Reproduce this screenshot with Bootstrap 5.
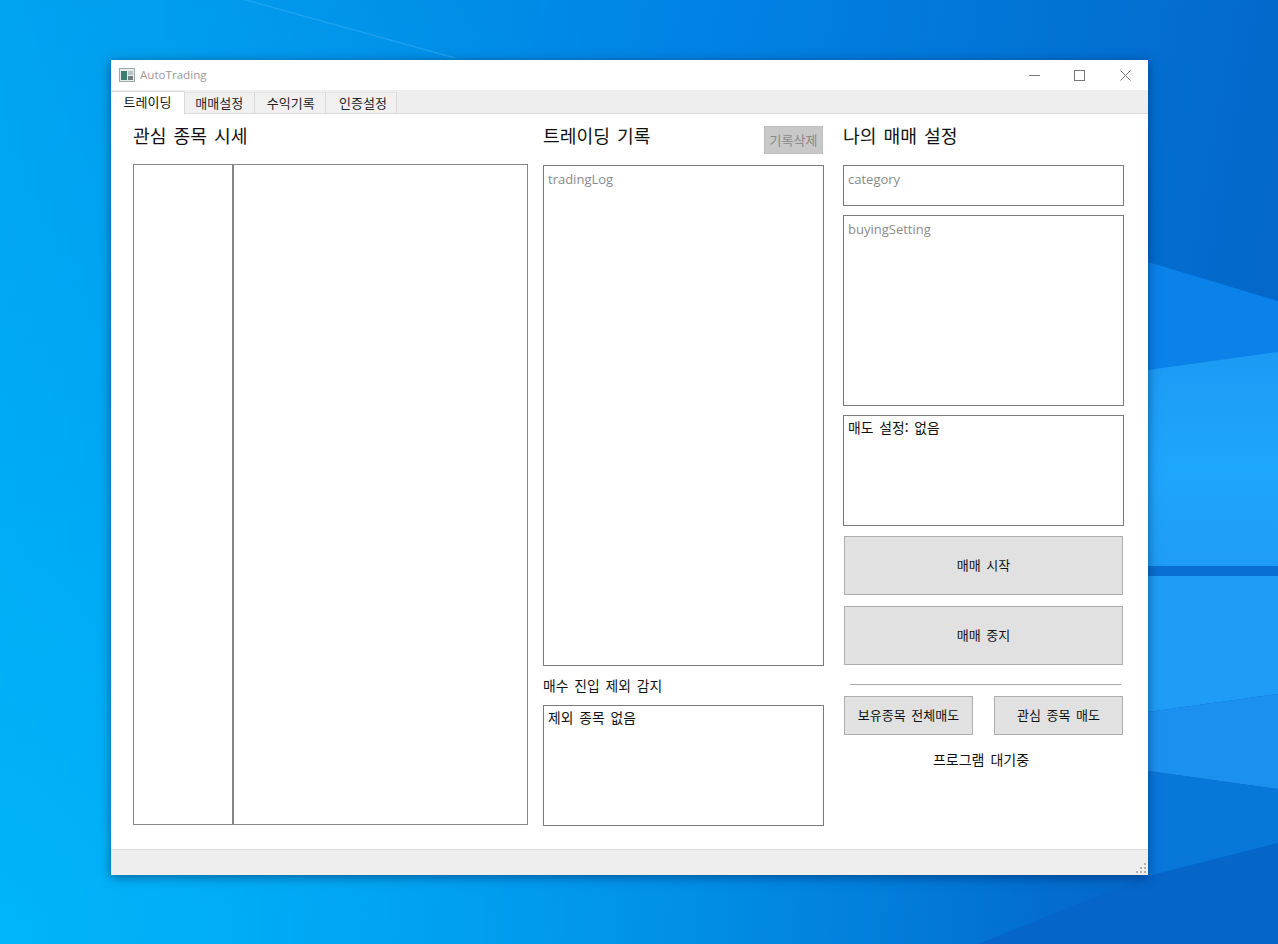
<!doctype html>
<html lang="ko">
<head>
<meta charset="utf-8">
<title>AutoTrading</title>
<link href="https://cdn.jsdelivr.net/npm/bootstrap@5.3.0/dist/css/bootstrap.min.css" rel="stylesheet">
<style>
html,body{height:944px;overflow:hidden}
body{position:relative;margin:0;background:radial-gradient(circle at 0 100%,rgba(0,186,252,.85),rgba(0,186,252,0) 1050px),linear-gradient(100deg,#00a2ef 0%,#0082e4 50%,#0462c4 100%);font-family:"Noto Sans CJK KR","Liberation Sans",sans-serif;font-size:13px;word-spacing:2px;color:#111}
.wall{position:absolute;inset:0;width:1278px;height:944px}
.appwin{position:absolute;left:111px;top:60px;width:1037px;height:815px;background:#fff;box-shadow:0 2px 10px rgba(0,20,60,.5);display:flex;flex-direction:column}
.titlebar{height:30px;flex:none;padding-left:8px;color:#9a9a9a;font-family:"Open Sans","Liberation Sans",sans-serif}
.titlebar .ttl{margin-left:5px;font-size:11.6px;word-spacing:0}
.wbtn{width:45px;height:30px}
.wbtn.wclose{width:46px}
.tabstrip{height:24px;flex:none;background:#eeeeee;border-bottom:1px solid #d9d9d9;padding-top:2px}
.tabitem{height:21px;font-size:13px;background:#f0f0f0;border-right:1px solid #d9d9d9;border-top:1px solid #e4e4e4;color:#222;line-height:20px;text-align:center}
.tabitem.cur{width:74px;height:23px;margin-top:-1px;background:#fff;border-top:1px solid #d9d9d9;line-height:20px;color:#111}
.tw70{width:69.5px}.tw72{width:71.5px;padding-left:2px}.tw71{width:71px;padding-left:4px}
.clientarea{flex:1;display:flex;padding:0 24px 0 22px}
.colq{width:395px;margin-right:15px}
.colm{width:281px;margin-right:19px}
.colr{width:281px}
.headrow{height:51px;padding-top:8px;font-size:18.2px;line-height:27px;color:#111}
.headrow.h50{height:50px}
.gridbox{height:661px;border:1px solid #868686}
.gridbox .fix{width:100px;border-right:2px solid #868686}
.tb{border:1px solid #7a7a7a;padding:3px 4px 0;font-size:13.8px;line-height:17px;background:#fff}
.ph{color:#8a8a8a;font-family:"Open Sans","Liberation Sans",sans-serif;font-size:13px;padding:5px 4px 0;word-spacing:0}
.delbtn{width:59px;height:28px;background:#c8c8c8;border:1px solid #bdbdbd;color:#8a8a8a;font-size:13px;line-height:26px;text-align:center;margin:4px 1px 0 0}
.gbtn{background:#e1e1e1;border:1px solid #adadad;color:#111;font-size:13px;display:flex;align-items:center;justify-content:center;padding-bottom:1px}
.gbig{height:59px;margin:0 1px 11px}
.gbig.glast{margin-bottom:19px}
.gsmall{width:129px;height:39px}
.btnrow{margin:11px 1px 0}
.lbl{font-size:13.8px;height:39px;line-height:38px}
.hlog{height:501px}.hex{height:121px}
.hcat{height:41px;margin-bottom:9px}
.hbuy{height:191px;margin-bottom:9px}
.hsell{height:111px;margin-bottom:10px}
.rule{height:1px;background:#a8a8a8;margin:0 3px 0 7px}
.waitline{font-size:14px;margin-top:15px;line-height:18px;margin-right:5px}
.statusline{height:26px;flex:none;background:#eeeeee;border-top:1px solid #d9d9d9;position:relative}
.grip{position:absolute;right:2px;bottom:2px}
</style>
</head>
<body>
<svg class="wall" viewBox="0 0 1278 944" aria-hidden="true">
<defs>
<linearGradient id="up" x1="0" y1="0" x2="0" y2="1"><stop offset="0" stop-color="#1c9af4"/><stop offset=".55" stop-color="#1ea6fc"/><stop offset="1" stop-color="#1f9cf5"/></linearGradient>
</defs>
<polygon points="243,0 249,0 458,58 452,58" fill="#35b0f5" opacity=".5"/>
<polygon points="1148,262 1278,301 1278,360 1148,380" fill="#0b82ea"/>
<polygon points="1148,370 1278,352 1278,566 1148,566" fill="url(#up)"/>
<polygon points="1148,566 1278,566 1278,576 1148,576" fill="#0a6fd2"/>
<polygon points="1148,576 1278,576 1278,694 1148,712" fill="#1f9df6"/>
<polygon points="1148,712 1278,694 1278,789 1148,771" fill="#1c90ee"/>
<polygon points="1148,771 1278,789 1278,843 1222,860 1148,884" fill="#0877da"/>
<polygon points="1278,843 1278,944 978,944 1148,876" fill="#0565c8"/>
</svg>
<div class="appwin">
<div class="titlebar d-flex align-items-center">
<svg width="16" height="14" viewBox="0 0 16 14"><rect x=".5" y=".5" width="15" height="13" fill="#e8ecec" stroke="#9aa"/><rect x="2" y="3" width="6" height="9" fill="#3e7d74"/><rect x="9" y="3" width="5" height="4" fill="#b8c4c8"/><rect x="9" y="8" width="5" height="4" fill="#707c80"/></svg>
<span class="ttl flex-grow-1">AutoTrading</span>
<div class="wbtn d-flex align-items-center justify-content-center"><svg width="11" height="11" viewBox="0 0 11 11"><path d="M0 5.5h11" stroke="#777" fill="none"/></svg></div>
<div class="wbtn d-flex align-items-center justify-content-center"><svg width="11" height="11" viewBox="0 0 11 11"><rect x=".5" y=".5" width="10" height="10" stroke="#777" fill="none"/></svg></div>
<div class="wbtn wclose d-flex align-items-center justify-content-center"><svg width="11" height="11" viewBox="0 0 11 11"><path d="M.5.5l10 10M10.5.5l-10 10" stroke="#777" fill="none"/></svg></div>
</div>
<div class="tabstrip d-flex">
<div class="tabitem cur">트레이딩</div><div class="tabitem tw70">매매설정</div><div class="tabitem tw72">수익기록</div><div class="tabitem tw71">인증설정</div>
</div>
<div class="clientarea">
<div class="colq">
<div class="headrow h50">관심 종목 시세</div>
<div class="gridbox d-flex"><div class="fix"></div></div>
</div>
<div class="colm d-flex flex-column">
<div class="headrow d-flex justify-content-between align-items-start"><span>트레이딩 기록</span><div class="delbtn">기록삭제</div></div>
<div class="tb ph hlog">tradingLog</div>
<div class="lbl">매수 진입 제외 감지</div>
<div class="tb hex">제외 종목 없음</div>
</div>
<div class="colr d-flex flex-column">
<div class="headrow">나의 매매 설정</div>
<div class="tb ph hcat">category</div>
<div class="tb ph hbuy">buyingSetting</div>
<div class="tb hsell">매도 설정: 없음</div>
<div class="gbtn gbig">매매 시작</div>
<div class="gbtn gbig glast">매매 중지</div>
<div class="rule"></div>
<div class="d-flex justify-content-between btnrow">
<div class="gbtn gsmall">보유종목 전체매도</div>
<div class="gbtn gsmall">관심 종목 매도</div>
</div>
<div class="text-center waitline">프로그램 대기중</div>
</div>
</div>
<div class="statusline"><svg class="grip" width="10" height="10" viewBox="0 0 10 10" fill="#b0b0b0"><rect x="8" y="0" width="2" height="2"/><rect x="4" y="4" width="2" height="2"/><rect x="8" y="4" width="2" height="2"/><rect x="0" y="8" width="2" height="2"/><rect x="4" y="8" width="2" height="2"/><rect x="8" y="8" width="2" height="2"/></svg></div>
</div>
<script src="https://cdn.jsdelivr.net/npm/bootstrap@5.3.0/dist/js/bootstrap.bundle.min.js"></script>
</body>
</html>
